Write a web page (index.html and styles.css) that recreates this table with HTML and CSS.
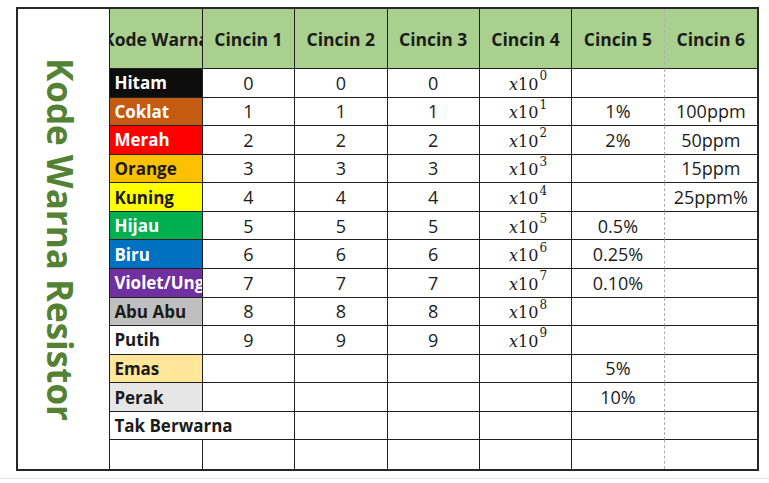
FILE: index.html
```html
<!DOCTYPE html>
<html lang="id">
<head>
<meta charset="utf-8">
<title>Kode Warna Resistor</title>
<link rel="stylesheet" href="styles.css">
</head>
<body>
<div class="page">
  <div class="sheet">
    <div class="title-cell"><span class="title">Kode Warna Resistor</span></div>

    <div class="c hd clip"><span>Kode Warna</span></div>
    <div class="c hd">Cincin 1</div>
    <div class="c hd">Cincin 2</div>
    <div class="c hd">Cincin 3</div>
    <div class="c hd">Cincin 4</div>
    <div class="c hd dash">Cincin 5</div>
    <div class="c hd last">Cincin 6</div>

    <div class="c lbl hitam">Hitam</div>
    <div class="c n">0</div><div class="c n">0</div><div class="c n">0</div>
    <div class="c m"><i>x</i>10<sup>0</sup></div>
    <div class="c n dash"></div><div class="c n last"></div>

    <div class="c lbl coklat">Coklat</div>
    <div class="c n">1</div><div class="c n">1</div><div class="c n">1</div>
    <div class="c m"><i>x</i>10<sup>1</sup></div>
    <div class="c n dash">1%</div><div class="c n last">100ppm</div>

    <div class="c lbl merah">Merah</div>
    <div class="c n">2</div><div class="c n">2</div><div class="c n">2</div>
    <div class="c m"><i>x</i>10<sup>2</sup></div>
    <div class="c n dash">2%</div><div class="c n last">50ppm</div>

    <div class="c lbl orange">Orange</div>
    <div class="c n">3</div><div class="c n">3</div><div class="c n">3</div>
    <div class="c m"><i>x</i>10<sup>3</sup></div>
    <div class="c n dash"></div><div class="c n last">15ppm</div>

    <div class="c lbl kuning">Kuning</div>
    <div class="c n">4</div><div class="c n">4</div><div class="c n">4</div>
    <div class="c m"><i>x</i>10<sup>4</sup></div>
    <div class="c n dash"></div><div class="c n last">25ppm%</div>

    <div class="c lbl hijau">Hijau</div>
    <div class="c n">5</div><div class="c n">5</div><div class="c n">5</div>
    <div class="c m"><i>x</i>10<sup>5</sup></div>
    <div class="c n dash">0.5%</div><div class="c n last"></div>

    <div class="c lbl biru">Biru</div>
    <div class="c n">6</div><div class="c n">6</div><div class="c n">6</div>
    <div class="c m"><i>x</i>10<sup>6</sup></div>
    <div class="c n dash">0.25%</div><div class="c n last"></div>

    <div class="c lbl violet">Violet/Ungu</div>
    <div class="c n">7</div><div class="c n">7</div><div class="c n">7</div>
    <div class="c m"><i>x</i>10<sup>7</sup></div>
    <div class="c n dash">0.10%</div><div class="c n last"></div>

    <div class="c lbl abu">Abu Abu</div>
    <div class="c n">8</div><div class="c n">8</div><div class="c n">8</div>
    <div class="c m"><i>x</i>10<sup>8</sup></div>
    <div class="c n dash"></div><div class="c n last"></div>

    <div class="c lbl putih">Putih</div>
    <div class="c n">9</div><div class="c n">9</div><div class="c n">9</div>
    <div class="c m"><i>x</i>10<sup>9</sup></div>
    <div class="c n dash"></div><div class="c n last"></div>

    <div class="c lbl emas">Emas</div>
    <div class="c n"></div><div class="c n"></div><div class="c n"></div>
    <div class="c n"></div>
    <div class="c n dash">5%</div><div class="c n last"></div>

    <div class="c lbl perak">Perak</div>
    <div class="c n"></div><div class="c n"></div><div class="c n"></div>
    <div class="c n"></div>
    <div class="c n dash">10%</div><div class="c n last"></div>

    <div class="c lbl span2">Tak Berwarna</div>
    <div class="c n"></div><div class="c n"></div>
    <div class="c n"></div>
    <div class="c n dash"></div><div class="c n last"></div>

    <div class="c lbl bottom"></div>
    <div class="c n bottom"></div><div class="c n bottom"></div><div class="c n bottom"></div>
    <div class="c n bottom"></div>
    <div class="c n dash bottom"></div><div class="c n last bottom"></div>
  </div>
</div>
</body>
</html>
```

FILE: styles.css
```css
* { box-sizing: border-box; }

html, body {
  margin: 0;
  background: #ffffff;
}

.page {
  padding: 7px 0 7px 16px;
  border-bottom: 1px solid #e2e2e2;
  width: 769px;
}

.sheet {
  display: grid;
  grid-template-columns: repeat(8, 1fr);
  grid-template-rows: 60px repeat(14, 1fr);
  width: 743px;
  height: 464px;
  border: 2px solid #262626;
  font-family: "Open Sans", "Liberation Sans", sans-serif;
  color: #1b1b1b;
}

.title-cell {
  grid-row: 1 / span 15;
  grid-column: 1;
  border-right: 1px solid #1f1f1f;
  display: flex;
  align-items: center;
  justify-content: center;
}

.title {
  writing-mode: vertical-rl;
  font-size: 35px;
  font-weight: 700;
  color: #548235;
  white-space: nowrap;
  margin-left: -6px;
}

.c {
  border-right: 1px solid #1f1f1f;
  border-bottom: 1px solid #1f1f1f;
  display: flex;
  align-items: center;
  justify-content: center;
  white-space: nowrap;
  overflow: hidden;
  min-width: 0;
}

.c.dash { border-right: 1px dashed #b0b0b0; }
.c.last { border-right: none; }
.c.bottom { border-bottom: none; }

.hd {
  background: #a9d08e;
  font-weight: 700;
  font-size: 17.5px;
}

.n {
  font-size: 18px;
}

.m {
  font-family: "DejaVu Serif", "Liberation Serif", serif;
  font-size: 16px;
  color: #1b1b1b;
  padding-top: 3px;
  padding-left: 5px;
}

.m sup {
  font-size: 12px;
  line-height: 0;
  vertical-align: baseline;
  position: relative;
  top: -8px;
  margin-left: 1px;
}

.lbl {
  justify-content: flex-start;
  padding-left: 4px;
  font-weight: 700;
  font-size: 17px;
}

.span2 { grid-column: span 2; }

.hitam  { background: #0d0d0d; color: #ffffff; }
.coklat { background: #c55a11; color: #ffffff; }
.merah  { background: #ff0000; color: #ffffff; }
.orange { background: #ffc000; color: #1b1b1b; }
.kuning { background: #ffff00; color: #1b1b1b; }
.hijau  { background: #00b050; color: #ffffff; }
.biru   { background: #0070c0; color: #ffffff; }
.violet { background: #7030a0; color: #ffffff; }
.abu    { background: #bfbfbf; color: #1b1b1b; }
.putih  { background: #ffffff; color: #1b1b1b; }
.emas   { background: #ffe699; color: #1b1b1b; }
.perak  { background: #e7e6e6; color: #1b1b1b; }
```
